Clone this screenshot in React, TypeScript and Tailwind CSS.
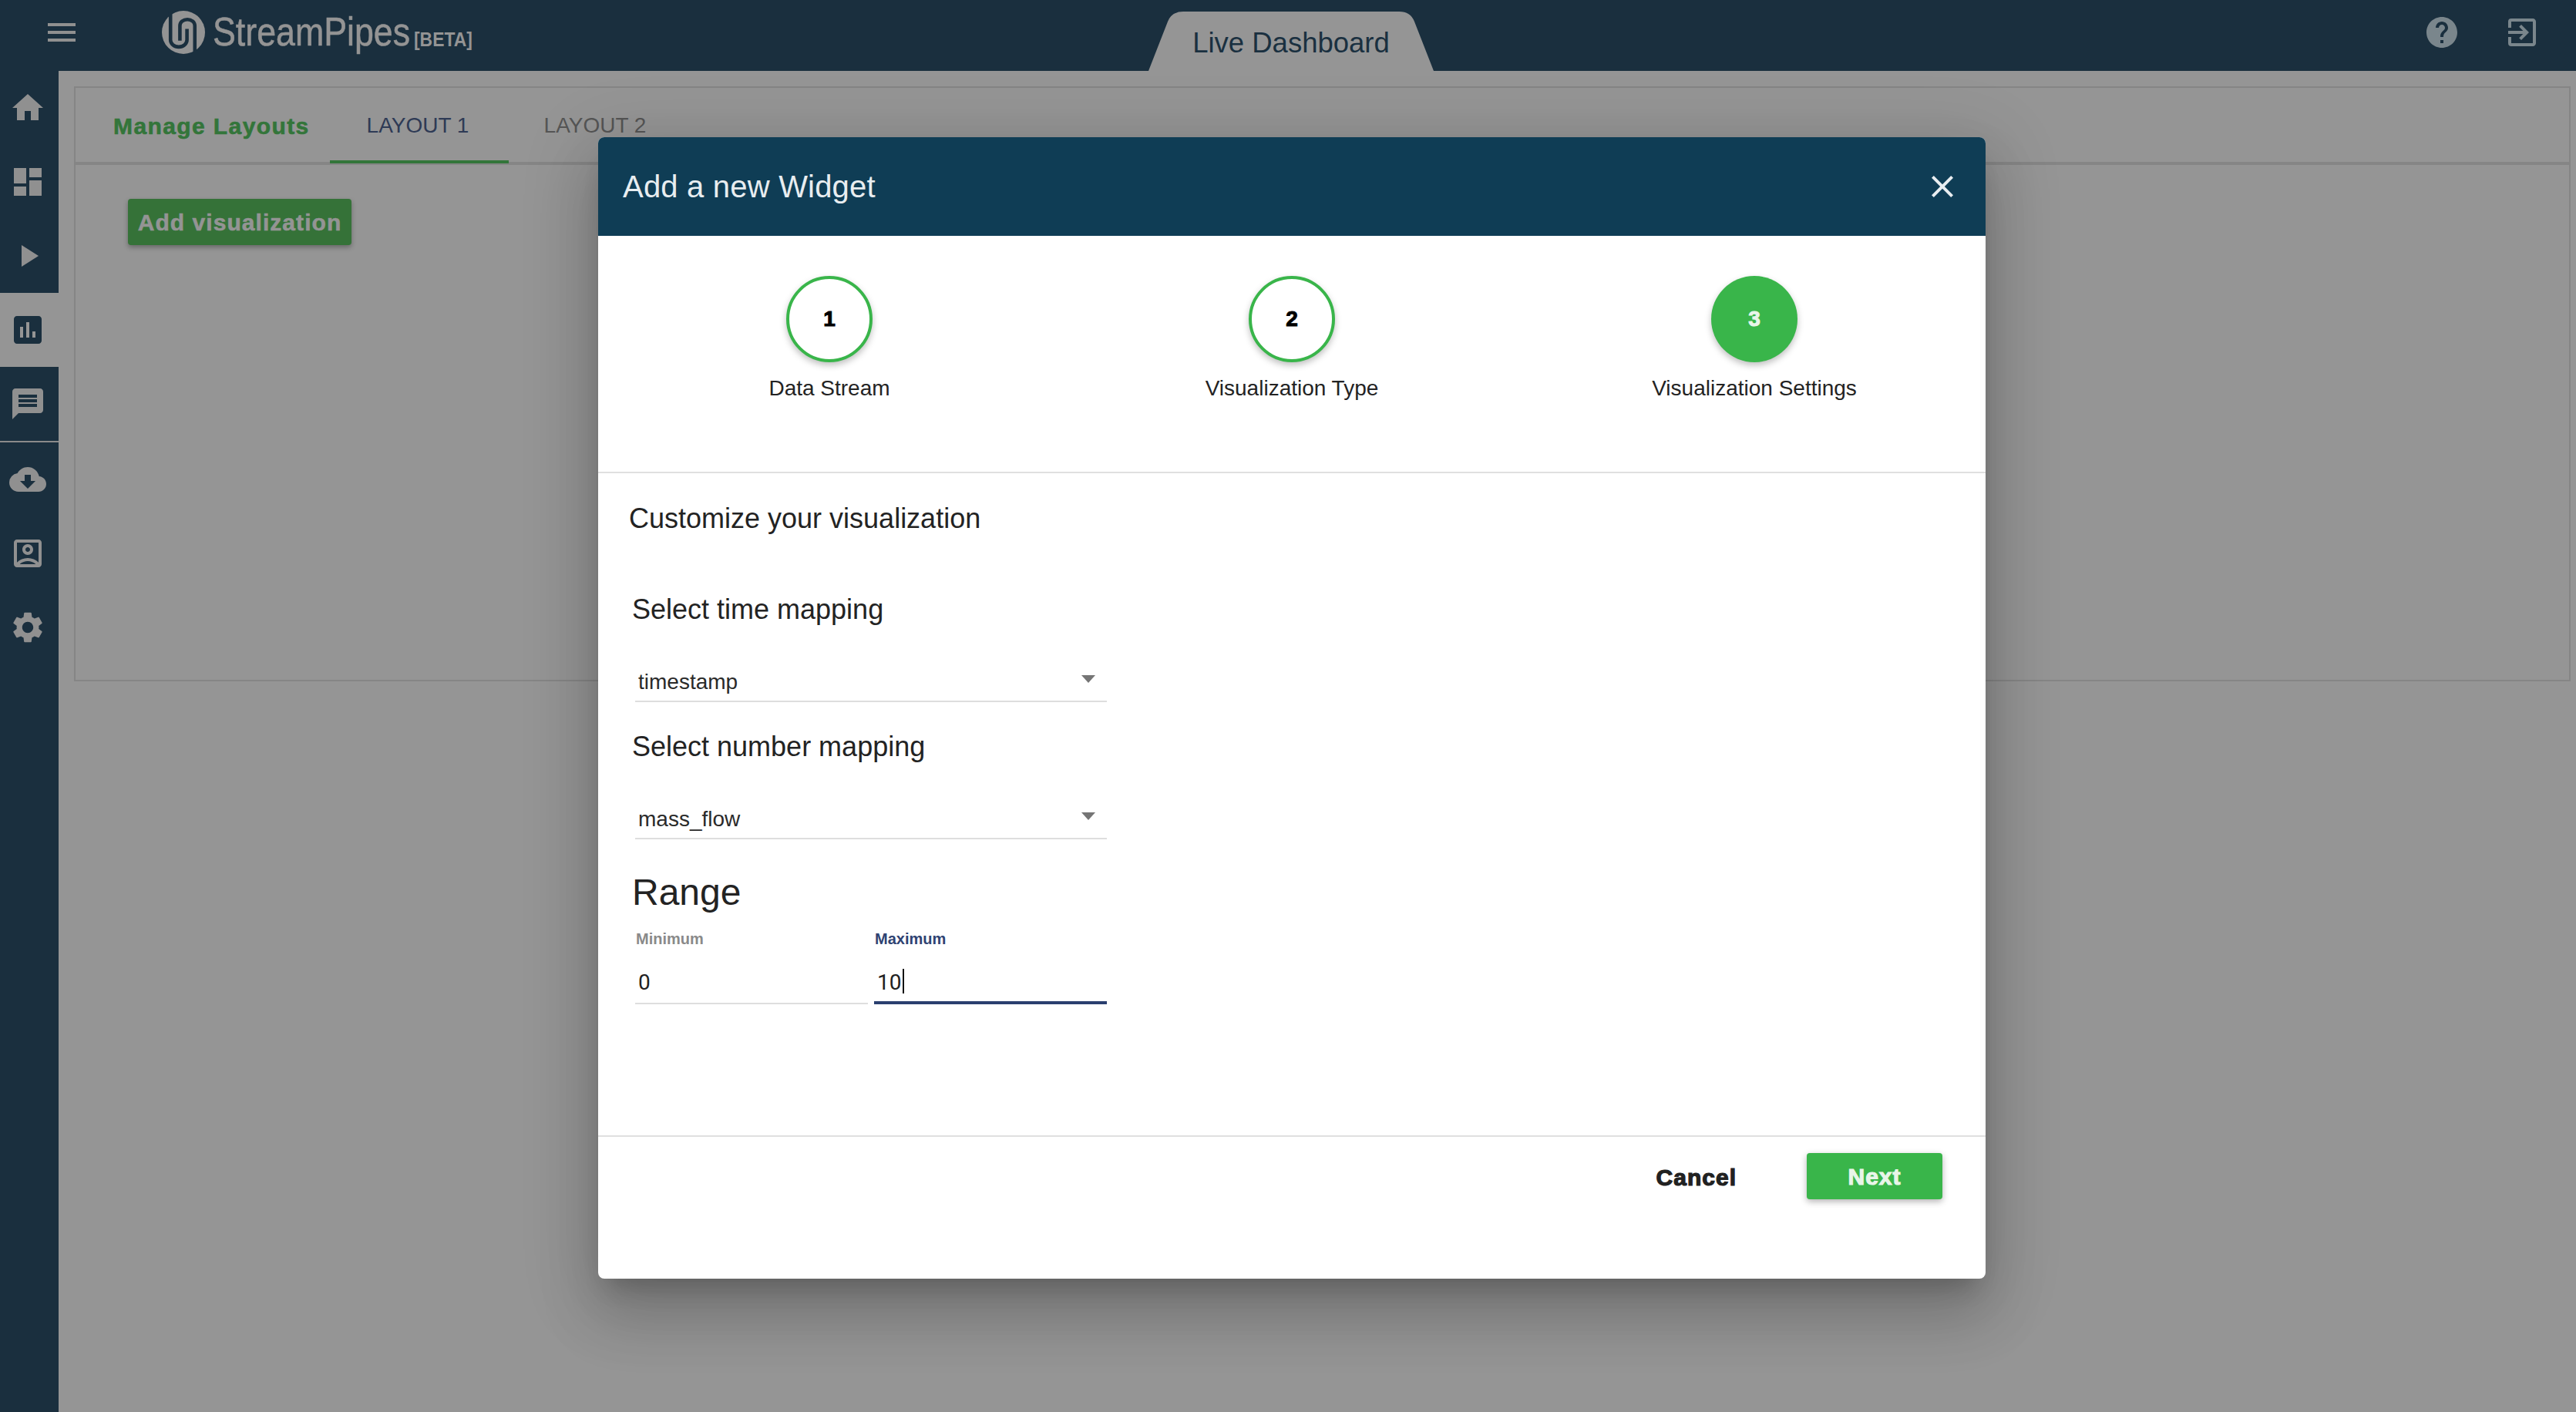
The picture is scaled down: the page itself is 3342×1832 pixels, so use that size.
import React from "react";
import {
  MdHome, MdDashboard, MdPlayArrow, MdInsertChart, MdMessage, MdCloudDownload,
  MdOutlineAccountBox, MdSettings, MdMenu, MdHelp, MdExitToApp, MdClose,
} from "react-icons/md";

const sans = "font-['Liberation_Sans',Arial,sans-serif]";
const roboto = "font-['Roboto','Liberation_Sans',sans-serif]";

function Logo() {
  return (
    <svg width="56" height="56" viewBox="0 0 55 55" fill="none" stroke="#1a2f3e" strokeWidth="4.5" className="shrink-0 mb-[8px]">
      <circle cx="27.5" cy="27.5" r="27.5" fill="#949494" stroke="none" />
      <path d="M11 0 V37 A10.5 9 0 0 0 32 37 V23" />
      <path d="M23 38 V19 A9.5 8 0 0 1 42 19 V56" />
    </svg>
  );
}

function NavItem({ children, active }: { children: React.ReactNode; active?: boolean }) {
  return (
    <div className={`h-24 pr-[5px] flex items-center justify-center text-[48px] ${active ? "bg-[#959595] text-[#1a2f3e]" : "text-[#909090]"}`}>
      {children}
    </div>
  );
}

function Step({ n, label, done }: { n: number; label: string; done?: boolean }) {
  return (
    <div className="flex-1 flex flex-col items-center">
      <div
        className={`w-28 h-28 rounded-full flex items-center justify-center text-[28px] font-bold [-webkit-text-stroke:1px_currentColor] shadow-[0_4px_8px_rgba(0,0,0,.25)] ${
          done ? "bg-[#39b54a] text-[#e8f5e9]" : "bg-white border-4 border-[#39b54a] text-black"
        }`}
      >
        {n}
      </div>
      <div className="mt-[18px] text-[28px] leading-8 text-[#232323]">{label}</div>
    </div>
  );
}

function SelectField({ value }: { value: string }) {
  return (
    <div className="ml-[8px] w-[612px] h-[98px] border-b-2 border-[#dedede] relative flex items-end pb-[8px] pl-[4px]">
      <span className="text-[28px] leading-8 text-[#2a2a2a]">{value}</span>
      <span className="absolute right-[15px] top-[63px] w-0 h-0 border-l-[9px] border-r-[9px] border-t-[10px] border-l-transparent border-r-transparent border-t-[#757575]" />
    </div>
  );
}

export default function App() {
  return (
    <div className={`${sans} relative w-[3342px] h-[1832px] overflow-hidden bg-[#959595] flex flex-col`}>
      {/* Top bar */}
      <header className="relative h-[92px] shrink-0 bg-[#1a2f3e] flex items-center">
        <MdMenu className="ml-[56px] mb-[8px] text-[48px] text-[#909090] shrink-0" />
        <div className="ml-[106px] flex items-center h-full">
          <Logo />
          <div className="relative ml-[10px] w-[254px] h-full">
            <span className="absolute left-0 top-[11px] origin-left scale-x-[0.86] whitespace-nowrap text-[52px] leading-[60px] text-[#949494] [-webkit-text-stroke:0.6px_currentColor]">
              StreamPipes
            </span>
          </div>
          <span className="ml-[7px] mt-[10px] origin-left scale-x-[0.88] whitespace-nowrap text-[26px] font-bold text-[#949494]">[BETA]</span>
        </div>

        <div className="absolute left-[1490px] top-[15px] w-[370px] h-[77px]">
          <svg width="370" height="77" viewBox="0 0 370 77" className="absolute inset-0">
            <path d="M0 77 L25 13 Q30 0 45 0 H325 Q340 0 345 13 L370 77 Z" fill="#959595" />
          </svg>
          <span className="absolute inset-x-0 top-[21px] text-center text-[36.5px] leading-10 text-[#1a3040]">Live Dashboard</span>
        </div>

        <div className="ml-auto mb-[8px] flex items-center mr-[46px]">
          <MdHelp className="text-[48px] text-[#7a868c]" />
          <MdExitToApp className="ml-[56px] text-[48px] text-[#7a868c]" />
        </div>
      </header>

      <div className="flex-1 flex min-h-0">
        {/* Sidebar */}
        <aside className="w-[76px] shrink-0 bg-[#1a2f3e] flex flex-col">
          <NavItem><MdHome /></NavItem>
          <NavItem><MdDashboard /></NavItem>
          <NavItem><MdPlayArrow /></NavItem>
          <NavItem active><MdInsertChart /></NavItem>
          <NavItem><MdMessage /></NavItem>
          <div className="h-[2px] bg-[#8a8a8a]" />
          <NavItem><MdCloudDownload /></NavItem>
          <NavItem><MdOutlineAccountBox /></NavItem>
          <NavItem><MdSettings /></NavItem>
        </aside>

        {/* Page behind the dialog */}
        <main className="flex-1 min-w-0 pl-[20px] pr-[7px] pt-[20px]">
          <section className="h-[772px] border-2 border-[#858585]">
            <div className="h-[100px] border-b-4 border-[#858585] flex items-stretch">
              <div className="pl-[49px] w-[330px] pt-[32px] text-[30px] leading-9 font-bold tracking-[1.4px] text-[#33753a] [-webkit-text-stroke:0.6px_currentColor] whitespace-nowrap">
                Manage Layouts
              </div>
              <div className="w-[232px] mb-[-2px] border-b-4 border-[#33753a] pr-[4px] pt-[31px] text-center text-[28px] leading-9 text-[#2e3a55]">LAYOUT 1</div>
              <div className="w-[232px] pr-[8px] pt-[31px] text-center text-[28px] leading-9 text-[#555]">LAYOUT 2</div>
            </div>
            <div className="pl-[68px] pt-[44px]">
              <button className="w-[290px] h-[60px] rounded-[4px] bg-[#357238] text-[#949494] text-[30px] font-bold tracking-[1.05px] [-webkit-text-stroke:0.6px_currentColor] shadow-[0_3px_6px_rgba(0,0,0,.3)]">
                Add visualization
              </button>
            </div>
          </section>
        </main>
      </div>

      {/* Dialog */}
      <div className="absolute left-[776px] top-[178px] w-[1800px] h-[1481px] bg-white rounded-[8px] flex flex-col shadow-[0_22px_30px_-14px_rgba(0,0,0,.2),0_48px_76px_6px_rgba(0,0,0,.14),0_18px_92px_16px_rgba(0,0,0,.12)]">
        <div className="h-[128px] shrink-0 bg-[#0f3d55] rounded-t-[8px] flex items-center justify-between pl-[32px] pr-[32px]">
          <span className="text-[40px] tracking-[0.2px] text-[#e8edf0]">Add a new Widget</span>
          <MdClose className="text-[48px] text-[#e8edf0]" />
        </div>

        <div className="h-[308px] shrink-0 border-b-2 border-[#e0e0e0] flex pt-[52px]">
          <Step n={1} label="Data Stream" />
          <Step n={2} label="Visualization Type" />
          <Step n={3} label="Visualization Settings" done />
        </div>

        <div className="flex-1 min-h-0 pl-[40px] pt-[37px]">
          <div className="text-[36px] leading-[44px] text-[#232323]">Customize your visualization</div>
          <div className="ml-[4px] mt-[74px] text-[36px] leading-[44px] text-[#232323]">Select time mapping</div>
          <SelectField value="timestamp" />
          <div className="ml-[4px] mt-[36px] text-[36px] leading-[44px] text-[#232323]">Select number mapping</div>
          <SelectField value="mass_flow" />
          <div className="ml-[4px] mt-[41px] text-[48px] leading-[56px] text-[#232323]">Range</div>
          <div className="ml-[8px] mt-[20px] flex gap-[8px] w-[612px]">
            <div className="flex-1 h-[97px] border-b-2 border-[#dedede] relative">
              <span className="absolute left-[1px] top-0 text-[20px] leading-6 font-bold text-[#8a8a8a]">Minimum</span>
              <span className={`${roboto} absolute left-[4px] top-[53px] text-[28px] leading-8 text-[#212121]`}>0</span>
            </div>
            <div className="flex-1 h-[97px] border-b-4 border-[#2a3f6f] relative">
              <span className="absolute left-[1px] top-0 text-[20px] leading-6 font-bold text-[#2f4372]">Maximum</span>
              <span className={`${roboto} absolute left-[4px] top-[53px] text-[28px] leading-8 text-[#212121]`}>10</span>
              <span className="absolute left-[37px] top-[51px] w-[2px] h-[32px] bg-[#111]" />
            </div>
          </div>
        </div>

        <div className="h-[186px] shrink-0 border-t-2 border-[#e0e0e0] flex justify-end items-start pt-[21px] pr-[56px]">
          <button className="mt-[14px] mr-[91px] text-[30px] leading-9 font-bold tracking-[1px] text-[#212121] [-webkit-text-stroke:1.2px_currentColor]">Cancel</button>
          <button className="w-[176px] h-[60px] rounded-[4px] bg-[#39b54a] text-[#e8f5e9] text-[30px] font-bold tracking-[1px] [-webkit-text-stroke:1.2px_currentColor] shadow-[0_3px_8px_rgba(0,0,0,.3)]">Next</button>
        </div>
      </div>
    </div>
  );
}
